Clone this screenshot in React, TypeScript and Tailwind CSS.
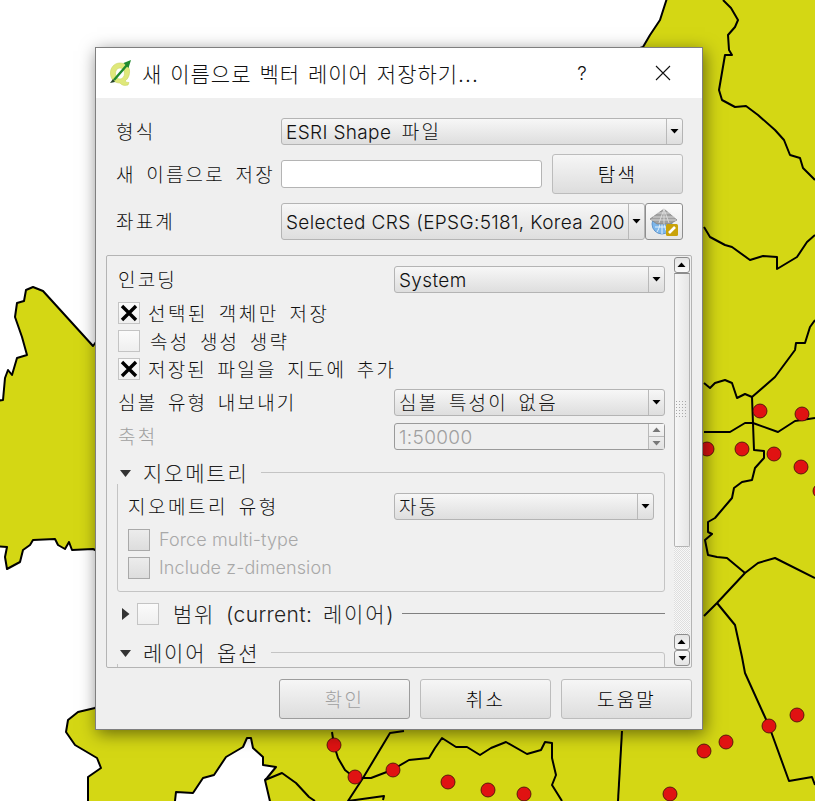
import type { ReactNode } from "react";

const land =
  "M668,-5 L820,-5 L820,810 L562,810 L272,810 L265,780 L267,778 L276,767 L263,765 L263,757 L253,748 L251,738 L247,738 L243,747 L226,757 L214,775 L203,778 L193,793 L176,792 L174,810 L88,810 L88,777 L101,768 L97,758 L75,745 L66,732 L68,720 L78,712 L95,708 L200,600 L93,549 L72,550 L69,542 L65,549 L58,545 L55,539 L33,540 L30,545 L23,550 L20,562 L7,569 L5,557 L7,547 L-5,546 L-5,401 L3,400 L5,378 L8,370 L12,375 L17,358 L27,355 L22,337 L15,317 L17,303 L24,301 L26,290 L33,287 L43,291 L93,346 L200,200 L643,47 L650,35 L660,20 Z";

const borders = [
  "M723,0 L731,8 L738,20 L735,27 L728,35 L729,50 L732,55 L725,55 L719,90 L722,100 L735,107 L746,106 L758,115 L775,130 L784,140 L790,155 L800,158 L803,168 L815,180",
  "M704,227 L710,237 L725,245 L732,247 L750,260 L763,256 L777,257 L777,269 L797,257 L807,242 L815,235",
  "M704,383 L710,388 L715,383 L725,380 L732,383 L737,398 L745,394 L752,397 L775,377 L795,350 L796,343 L805,343 L810,327 L815,320",
  "M752,397 L754,450 L764,451 L764,458 L755,468 L752,480 L742,482 L734,488 L732,498 L715,518 L708,522 L708,532 L712,534 L705,540 L708,555 L717,557 L727,558 L745,573",
  "M704,432 L730,432 L745,423 L753,423 L778,432 L795,421 L815,418",
  "M704,616 L717,603 L745,573 L758,563 L775,558 L815,578",
  "M717,603 L735,625 L742,657 L745,673 L769,726 L789,781 L812,777 L815,785",
  "M265,780 L282,773 L296,783 L309,797 L315,801",
  "M332,732 L334,745 L338,758 L345,770 L355,778",
  "M404,731 L390,733 L363,778 L348,801 L384,796 L383,800",
  "M355,778 L371,778 L392,770 L409,760 L429,758 L435,748 L442,738 L456,747 L467,747 L480,755 L491,748 L506,742 L527,754 L541,750 L545,742 L552,743 L552,758 L556,775 L552,785 L562,801",
  "M622,731 L618,801",
];

const points = [
  [334, 745], [355, 777], [393, 770], [448, 782], [488, 790], [524, 794], [670, 794],
  [704, 751], [726, 742], [769, 726], [797, 715], [707, 449], [742, 449], [760, 411],
  [802, 414], [774, 454], [801, 467], [820, 491],
];

function Arrow({ color = "#000" }: { color?: string }) {
  return (
    <svg width="9" height="5" viewBox="0 0 9 5">
      <path d="M0.5 0 H8.5 L4.5 4.5 Z" fill={color} />
    </svg>
  );
}

// korean text sits a bit low in the reference
function T({ children, className = "" }: { children: ReactNode; className?: string }) {
  return <div className={`whitespace-nowrap pt-[2px] ${className}`}>{children}</div>;
}

function En({ children }: { children: ReactNode }) {
  return <span className="tracking-[0.35px] [word-spacing:0px]">{children}</span>;
}

function Combo({ children, className }: { children: ReactNode; className: string }) {
  return (
    <div className={`flex items-center rounded-[3px] border border-[#b4b4b4] bg-gradient-to-b from-[#f7f7f7] to-[#dedede] ${className}`}>
      <div className="flex-1 whitespace-nowrap pl-1 pt-[2px]">{children}</div>
      <div className="flex h-full w-4 shrink-0 items-center justify-center border-l border-[#b9b9b9]">
        <Arrow />
      </div>
    </div>
  );
}

function Check({ checked, disabled, className = "" }: { checked?: boolean; disabled?: boolean; className?: string }) {
  return (
    <div
      className={`flex h-[22px] w-[22px] shrink-0 items-center justify-center border ${
        disabled ? "border-[#a9a9a9] bg-gradient-to-b from-[#ececec] to-[#dddddd]" : "border-[#c4c4c4] bg-gradient-to-b from-[#fbfbfb] to-[#efefef]"
      } ${className}`}
    >
      {checked && (
        <svg width="18" height="18" viewBox="0 0 18 18">
          <path d="M2 2 L16 16 M16 2 L2 16" stroke="#000" strokeWidth="3.4" />
        </svg>
      )}
    </div>
  );
}

function Btn({ label, disabled, className = "" }: { label: string; disabled?: boolean; className?: string }) {
  return (
    <div
      className={`flex h-10 w-[131px] items-center justify-center rounded-[3px] border bg-gradient-to-b from-[#f6f6f6] to-[#dddddd] ${
        disabled ? "border-[#9c9c9c] text-[#a0a0a0]" : "border-[#bcbcbc] text-black"
      } ${className}`}
    >
      <T>{label}</T>
    </div>
  );
}

function ScrollBtn({ className = "" }: { className?: string }) {
  return (
    <div className={`flex h-4 w-full items-center justify-center rounded-[3px] border border-[#8c8c8c] bg-gradient-to-b from-[#fafafa] to-[#e4e4e4] ${className}`}>
      <Arrow />
    </div>
  );
}

function GroupTitle({ label }: { label: string }) {
  return (
    <div className="absolute -left-px -top-[10px] flex h-[21px] items-center bg-[#f0f0f0] pl-[3px] pr-3">
      <svg width="11" height="7" viewBox="0 0 11 7">
        <path d="M0 0 H11 L5.500 7 Z" fill="#333" />
      </svg>
      <div className="ml-3 whitespace-nowrap text-[21px] tracking-[1.800px] text-[#222]">{label}</div>
    </div>
  );
}

function QgisIcon() {
  return (
    <svg width="28" height="28" viewBox="0 0 28 28">
      <path d="M13 4 C7 4 3 9 3.5 15 C4 21 8 24 13 24 C14.500 26 17 27 21 26 L22 23.500 C20 23.500 19 23 18 22 C21 20 23 16 22.500 11 C22 7 18 4 13 4 Z M13 9 C16 9 17.500 11.500 17.500 14.500 C17.500 17.500 15.500 20 13 20 C10 20 8.500 17.500 8.500 14.500 C8.500 11.500 10 9 13 9 Z" fill="#dfe87a" stroke="#c9d35e" strokeWidth="0.6" fillRule="evenodd" />
      <path d="M7 21 L20 6" stroke="#1f8a2e" strokeWidth="2.4" />
      <path d="M24 1 L16.500 4 L21.500 9 Z" fill="#1f8a2e" />
      <path d="M3 24 L8 23 L6 20 Z" fill="#24452a" />
    </svg>
  );
}

function CrsIcon() {
  return (
    <svg width="30" height="30" viewBox="0 0 30 30">
      <circle cx="13" cy="17" r="10" fill="#7db6ea" stroke="#4b86c4" strokeWidth="0.8" />
      <path d="M6 20 H20 M13 14 V27 M8 25 C11 20 11 17 10 14 M18 25 C15 20 15 17 16 14" stroke="#e6f2fb" strokeWidth="1" fill="none" />
      <path d="M15 2 L28 13 L21 17 H8 L1 12 Z" fill="#a0a0a0" stroke="#777" strokeWidth="0.6" />
      <path d="M15 2 L10 16 M15 2 L20 16 M15 2 V17 M8 6 H22 M4 10 H26 M2 13 H27" stroke="#e4e4e4" strokeWidth="0.8" />
      <rect x="17" y="17" width="12" height="12" rx="1.500" fill="#c9a20a" />
      <path d="M20 26 L26 20" stroke="#fff" strokeWidth="2.600" />
    </svg>
  );
}

export default function App() {
  const font = "font-['Inter','Noto_Sans_CJK_KR',sans-serif]";
  return (
    <div className="relative h-[801px] w-[815px] overflow-hidden bg-white">
      <svg className="absolute inset-0" width="815" height="801" viewBox="0 0 815 801">
        <path d={land} fill="#d4d714" stroke="#000" strokeWidth="2" strokeLinejoin="round" />
        {borders.map((d) => (
          <path key={d} d={d} fill="none" stroke="#000" strokeWidth="2" strokeLinejoin="round" />
        ))}
        {points.map(([x, y]) => (
          <circle key={`${x}-${y}`} cx={x} cy={y} r="7" fill="#e01212" stroke="#3a0a0a" strokeWidth="0.8" />
        ))}
      </svg>

      {/* dialog window */}
      <div className={`absolute left-[95px] top-[47px] flex h-[683px] w-[608px] flex-col border border-[#7f7f7f] bg-[#efefef] text-[19px] font-light leading-none tracking-[2.2px] text-[#111] shadow-[2px_4px_16px_rgba(0,0,0,0.5)] [word-spacing:3px] ${font}`}>
        <div className="flex h-[50px] shrink-0 items-center bg-white pl-[11px]">
          <QgisIcon />
          <T className="ml-[7px] w-[425px] pt-[3px] text-[21px] tracking-[1px] [word-spacing:1px]">새 이름으로 벡터 레이어 저장하기...</T>
          <div className="w-[30px] text-center text-[19px] tracking-normal">?</div>
          <svg className="ml-[58px]" width="16" height="16" viewBox="0 0 16 16">
            <path d="M1 1 L15 15 M15 1 L1 15" stroke="#111" strokeWidth="1.100" />
          </svg>
        </div>

        <div className="flex flex-col pl-5 pr-[19px] pt-5">
          <div className="flex h-[27px] items-center">
            <T className="w-[165px]">형식</T>
            <Combo className="h-[27px] flex-1"><En>ESRI Shape</En> 파일</Combo>
          </div>
          <div className="mt-[9px] flex h-10 items-center">
            <T className="w-[165px]">새 이름으로 저장</T>
            <div className="h-[28px] w-[261px] rounded-[3px] border border-[#b4b4b4] bg-white" />
            <Btn label="탐색" className="ml-[10px]" />
          </div>
          <div className="mt-[9px] flex h-[37px] items-center">
            <T className="w-[165px]">좌표계</T>
            <Combo className="h-[37px] w-[364px]"><En>Selected CRS (EPSG:5181, Korea 200</En></Combo>
            <div className="flex h-[37px] flex-1 items-center justify-center rounded-[3px] border border-[#8e8e8e] bg-gradient-to-b from-[#fbfbfb] to-[#e6e6e6]">
              <CrsIcon />
            </div>
          </div>
        </div>

        <div className="ml-[10px] mt-[15px] flex h-[413px] w-[586px] shrink-0 rounded-[2px] border border-[#b4b4b4] bg-[#f0f0f0]">
          <div className="h-full w-[567px] overflow-hidden pl-[10px] pr-[9px] pt-[10px]">
            <div className="flex h-[27px] items-center justify-between pl-px">
              <T>인코딩</T>
              <Combo className="h-[27px] w-[271px]"><En>System</En></Combo>
            </div>
            <div className="mt-[9px] flex h-[22px] items-center pl-px">
              <Check checked />
              <T className="ml-2 tracking-[2.500px]">선택된 객체만 저장</T>
            </div>
            <div className="mt-[6px] flex h-[22px] items-center pl-px">
              <Check />
              <T className="ml-[10px]">속성 생성 생략</T>
            </div>
            <div className="mt-[6px] flex h-[22px] items-center pl-px">
              <Check checked />
              <T className="ml-2">저장된 파일을 지도에 추가</T>
            </div>
            <div className="mt-[9px] flex h-[27px] items-center justify-between pl-px">
              <T>심볼 유형 내보내기</T>
              <Combo className="h-[27px] w-[271px]">심볼 특성이 없음</Combo>
            </div>
            <div className="mt-[7px] flex h-[27px] items-center justify-between pl-px text-[#a0a0a0]">
              <T>축척</T>
              <div className="flex h-[27px] w-[271px] items-center rounded-[3px] border border-[#9a9a9a] bg-[#efefef]">
                <div className="flex-1 pl-1 pt-[2px]"><En>1:50000</En></div>
                <div className="flex h-full w-4 flex-col border-l border-[#b9b9b9] bg-gradient-to-b from-[#f7f7f7] to-[#e2e2e2]">
                  <div className="flex flex-1 rotate-180 items-center justify-center border-t border-[#b9b9b9]">
                    <Arrow color="#777" />
                  </div>
                  <div className="flex flex-1 items-center justify-center">
                    <Arrow color="#777" />
                  </div>
                </div>
              </div>
            </div>

            <div className="relative mt-[22px] h-[120px] rounded-[3px] border border-[#c4c4c4] px-[10px] pt-5">
              <GroupTitle label="지오메트리" />
              <div className="flex h-[27px] items-center justify-between">
                <T className="tracking-[2.500px]">지오메트리 유형</T>
                <Combo className="h-[27px] w-[260px]">자동</Combo>
              </div>
              <div className="mt-[9px] flex h-[22px] items-center text-[#a8a8a8]">
                <Check disabled />
                <div className="ml-[9px] whitespace-nowrap text-[18px] tracking-[0.1px] [word-spacing:0px]">Force multi-type</div>
              </div>
              <div className="mt-[6px] flex h-[22px] items-center text-[#a8a8a8]">
                <Check disabled />
                <div className="ml-[9px] whitespace-nowrap text-[18px] tracking-[0.1px] [word-spacing:0px]">Include z-dimension</div>
              </div>
            </div>

            <div className="mt-[11px] flex h-[22px] items-center pl-[5px]">
              <svg width="8" height="12" viewBox="0 0 8 12">
                <path d="M0 0 L7.500 6 L0 12 Z" fill="#333" />
              </svg>
              <Check className="ml-[7px]" />
              <div className="ml-[14px] whitespace-nowrap text-[21px] tracking-[1.800px] text-[#222]">범위 <En>(current:</En> 레이어<En>)</En></div>
              <div className="ml-2 h-px flex-1 -translate-y-px bg-[#808080]" />
            </div>

            <div className="relative mt-[27px] h-[40px] rounded-[3px] border border-[#c4c4c4]">
              <GroupTitle label="레이어 옵션" />
            </div>
          </div>

          {/* scrollbar */}
          <div className="flex h-full w-[17px] flex-col py-px pr-px">
            <ScrollBtn className="rotate-180" />
            <div className="flex h-[274px] shrink-0 items-center justify-center rounded-b-[2px] border border-[#b4b4b4] border-t-[#8c8c8c] bg-gradient-to-r from-[#f7f7f7] to-[#e6e6e6]">
              <svg width="12" height="18" viewBox="0 0 12 18">
                <defs>
                  <pattern id="grip" width="3" height="3" patternUnits="userSpaceOnUse">
                    <rect width="1" height="1" fill="#a8a8a8" />
                  </pattern>
                </defs>
                <rect width="12" height="18" fill="url(#grip)" />
              </svg>
            </div>
            <div className="flex-1 bg-[repeating-conic-gradient(#dedede_0_25%,#f8f8f8_0_50%)] bg-[length:2px_2px]" />
            <ScrollBtn className="rotate-180" />
            <ScrollBtn />
          </div>
        </div>

        <div className="ml-[183px] mt-[11px] flex gap-[10px]">
          <Btn label="확인" disabled />
          <Btn label="취소" />
          <Btn label="도움말" />
        </div>
      </div>
    </div>
  );
}
